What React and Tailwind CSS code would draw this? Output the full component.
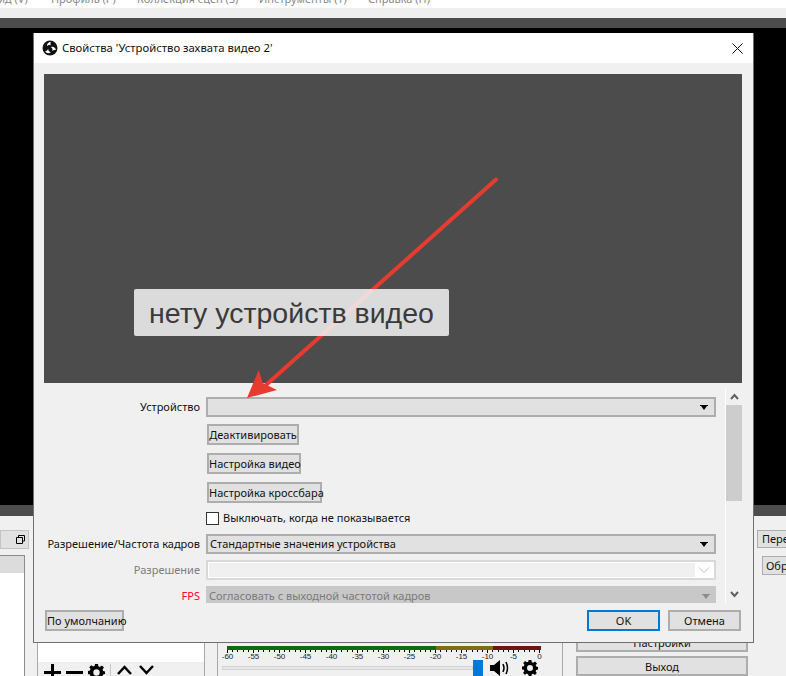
import React from "react";

const ui = { fontFamily: '"Noto Sans", Roboto, sans-serif' };

const scale = [-60, -55, -50, -45, -40, -35, -30, -25, -20, -15, -10, -5, 0];
const ticks = Array.from({ length: 61 }, (_, i) => i);

const Button = ({ children, className = "", border = "border-[#adadad]" }) => (
  <button className={`h-[21px] whitespace-nowrap border-2 bg-[#e1e1e1] text-[11px] leading-none text-[#111] ${border} ${className}`}>
    {children}
  </button>
);

const Caret = () => (
  <svg width="8" height="5" viewBox="0 0 8 5" className="shrink-0">
    <path d="M0 0H8V1H7L4 5L1 1H0Z" fill="#000" />
  </svg>
);

const Chevron = ({ up }) => (
  <svg width="9" height="7" viewBox="0 0 9 7" className={up ? "" : "rotate-180"}>
    <path d="M1 6L4.5 2L8 6" fill="none" stroke="#5f5f5f" strokeWidth="2" />
  </svg>
);

const Row = ({ label, labelClass = "text-[#111]", className = "", children }) => (
  <div className={`flex items-center gap-[6px] ${className}`}>
    <span className={`w-[156px] shrink-0 whitespace-nowrap text-right text-[11px] ${labelClass}`}>{label}</span>
    {children}
  </div>
);

const ObsLogo = () => (
  <svg width="16" height="16" viewBox="0 0 16 16">
    <circle cx="8" cy="8" r="7.5" fill="#111" />
    <path d="M9 1.800C6.400 2 4.700 3.800 5 6.300C5.800 4.900 7.500 4.500 9 5.300C8.300 4.200 8.300 2.900 9 1.800Z" fill="#fff" />
    <path d="M14 9.800C13.200 7.200 10.900 6.100 8.800 7C10.300 7.700 11 9.400 10.200 10.900C11.300 10.200 12.600 9.900 14 9.800Z" fill="#fff" />
    <path d="M3 11.600C4.700 13.700 7.200 13.800 8.900 12.200C7.200 12 6 10.500 6.200 8.700C5.600 10 4.500 11.100 3 11.600Z" fill="#fff" />
  </svg>
);

const Gear = ({ size = 16 }) => (
  <svg width={size} height={size} viewBox="0 0 16 16">
    <path
      fillRule="evenodd"
      d="M6.600 0H9.400L9.800 2.200L11.200 2.800L13.100 1.500L15 3.400L13.700 5.200L14.200 6.600L16 7V9.500L14.200 9.900L13.600 11.300L14.800 13.100L12.900 15L11.100 13.700L9.800 14.200L9.400 16H6.600L6.200 14.200L4.800 13.600L3 14.800L1.100 12.900L2.300 11.100L1.800 9.800L0 9.400V6.600L1.900 6.200L2.400 4.800L1.200 3L3.100 1.100L4.900 2.300L6.200 1.800ZM8 5A3 3 0 1 0 8 11A3 3 0 1 0 8 5Z"
      fill="#000"
    />
  </svg>
);

const SourcesToolbar = () => (
  <div className="flex h-[14px] items-start gap-[5px] overflow-hidden bg-[#f0f0f0] pl-[6px] pt-[2px]">
    <svg width="17" height="17" viewBox="0 0 17 17"><path d="M7 0H10V7H17V10H10V17H7V10H0V7H7Z" fill="#000" /></svg>
    <svg width="17" height="17" viewBox="0 0 17 17"><path d="M0 7H17V10H0Z" fill="#000" /></svg>
    <Gear size={17} />
    <div className="h-[14px] w-px bg-[#c8c8c8]" />
    <svg width="17" height="12" viewBox="0 0 17 12"><path d="M2 10L8.500 3L15 10" fill="none" stroke="#000" strokeWidth="2.500" /></svg>
    <svg width="17" height="12" viewBox="0 0 17 12"><path d="M2 2L8.500 9L15 2" fill="none" stroke="#000" strokeWidth="2.500" /></svg>
  </div>
);

const Mixer = () => (
  <div className="ml-[9px] pt-[4px]">
    <div className="flex h-[4px] w-[314px]">
      <div className="w-[209px] bg-[#0f6b0f]" />
      <div className="w-[57px] bg-[#7d6f10]" />
      <div className="flex-1 bg-[#6e1414]" />
    </div>
    <div className="flex h-[3px] w-[314px] justify-between">
      {ticks.map((t) => (
        <div key={t} className={`w-px bg-black ${t % 5 === 0 ? "h-[3px]" : "h-[2px]"}`} />
      ))}
    </div>
    <div className="-ml-[6px] flex h-[10px] w-[325px] justify-between text-[8px] leading-[8px] text-[#222]" style={{ fontFamily: '"Liberation Sans", sans-serif' }}>
      {scale.map((s) => (
        <span key={s} className="w-[13px] text-center">{s}</span>
      ))}
    </div>
    <div className="-ml-[5px] mt-[-3px] flex items-center">
      <div className="h-[4px] w-[251px] border border-[#d4d4d4] bg-[#e6e6e6]" />
      <div className="h-[16px] w-[10px] bg-[#0078d7]" />
      <svg width="22" height="16" viewBox="0 0 22 16" className="ml-[7px]">
        <path d="M0 5H4L10 0V16L4 11H0Z" fill="#000" />
        <path d="M13 4Q15 8 13 12M16 2Q19 8 16 14" fill="none" stroke="#000" strokeWidth="1.500" />
      </svg>
      <div className="ml-[10px]"><Gear size={16} /></div>
    </div>
  </div>
);

const Background = () => (
  <div className="flex h-[676px] w-[786px] flex-col overflow-hidden bg-[#f0f0f0] text-[11px] text-[#111]" style={ui}>
    <div className="h-[8px] overflow-hidden bg-white">
      <div className="-mt-[9px] flex whitespace-nowrap text-[11px] leading-[16px] text-[#888]">
        <span className="-ml-[9px] w-[60px]">Вид (V)</span>
        <span className="w-[86px]">Профиль (P)</span>
        <span className="w-[122px]">Коллекция сцен (S)</span>
        <span className="w-[109px]">Инструменты (T)</span>
        <span>Справка (H)</span>
      </div>
    </div>
    <div className="h-[10px] bg-[#efefef]" />
    <div className="h-[10px] bg-[#4c4c4c]" />
    <div className="h-[477px] bg-black" />
    <div className="h-[11px] bg-[#4c4c4c]" />
    <div className="flex min-h-0 flex-1">
      <div className="w-[37px] shrink-0 pt-[14px]">
        <div className="flex h-[19px] w-[29px] items-center justify-end border border-[#c4c4c4] bg-[#e1e1e1] pr-[3px]">
          <svg width="9" height="9" viewBox="0 0 9 9"><path d="M2.500 2.500V.5H8.500V6H6.500M.5 2.500H6.500V8.500H.5Z" fill="none" stroke="#000" /></svg>
        </div>
        <div className="mt-[6px] h-[130px] w-[25px] border-r border-t border-[#8c8c8c] bg-white">
          <div className="h-[17px] bg-[#dcdcdc]" />
        </div>
      </div>
      <div className="flex w-[168px] shrink-0 flex-col border-l border-r border-[#a8a8a8] bg-white">
        <div className="flex-1" />
        <SourcesToolbar />
      </div>
      <div className="ml-[12px] w-[346px] shrink-0 border-l border-r border-[#a8a8a8]">
        <div className="h-[126px]" />
        <Mixer />
      </div>
      <div className="ml-[13px] flex w-[172px] shrink-0 flex-col gap-[4px] pt-[116px]">
        <Button className="h-[20px]">Настройки</Button>
        <Button className="h-[20px]">Выход</Button>
      </div>
      <div className="ml-[9px] flex-1 overflow-hidden pt-[14px]">
        <div className="h-[18px] w-[40px] whitespace-nowrap border border-[#adadad] bg-[#e1e1e1] pl-[4px] leading-[16px]">Перейти</div>
        <div className="ml-[5px] mt-[8px] h-[19px] w-[40px] whitespace-nowrap border border-[#adadad] bg-[#e1e1e1] pl-[3px] leading-[17px]">Обрезать</div>
      </div>
    </div>
  </div>
);

const Dialog = () => (
  <div className="absolute left-[33px] top-[33px] flex h-[610px] w-[721px] flex-col border border-[#6f6f6f] border-t-0 bg-[#f0f0f0] text-[11px] text-[#111]" style={ui}>
    <div className="flex h-[30px] shrink-0 items-center bg-white pl-[8px] pr-[10px]">
      <ObsLogo />
      <span className="ml-[4px] flex-1 text-[11.300px]">Свойства 'Устройство захвата видео 2'</span>
      <svg width="11" height="11" viewBox="0 0 11 11"><path d="M.5 .5L10.500 10.500M10.500 .5L.5 10.500" stroke="#111" /></svg>
    </div>

    <div className="relative ml-[10px] mt-[11px] h-[309px] w-[698px] shrink-0 bg-[#4c4c4c]">
      <div className="absolute left-[90px] top-[215px] z-20 flex h-[47px] w-[315px] items-center justify-center rounded-[2px] bg-[#f5f5f5]/85 pt-[2px] text-[28.500px] text-[#3a3a3a]" style={{ fontFamily: '"Liberation Sans", sans-serif' }}>
        нету устройств видео
      </div>
    </div>

    <div className="ml-[10px] mt-[5px] flex h-[215px] w-[698px] shrink-0">
      <div className="w-[681px] overflow-hidden pt-[9px]">
        <Row label="Устройство">
          <div className="flex h-[20px] w-[510px] items-center justify-end border-2 border-[#adadad] bg-[#e1e1e1] pr-[6px]"><Caret /></div>
        </Row>
        <div className="ml-[163px] mt-[7px] flex flex-col items-start gap-[8px]">
          <Button className="w-[92px]">Деактивировать</Button>
          <Button className="w-[94px]">Настройка видео</Button>
          <Button className="w-[115px]">Настройка кроссбара</Button>
        </div>
        <label className="ml-[162px] mt-[9px] flex h-[13px] items-center gap-[4px]">
          <span className="h-[13px] w-[13px] border border-[#333] bg-white" />
          <span className="whitespace-nowrap">Выключать, когда не показывается</span>
        </label>
        <Row label="Разрешение/Частота кадров" className="mt-[9px]">
          <div className="flex h-[20px] w-[510px] items-center justify-between border-2 border-[#adadad] bg-[#e1e1e1] pl-[2px] pr-[6px]">
            <span>Стандартные значения устройства</span>
            <Caret />
          </div>
        </Row>
        <Row label="Разрешение" labelClass="text-[#7d7d7d]" className="mt-[6px]">
          <div className="flex h-[20px] w-[510px] items-center border-2 border-[#d9d9d9] bg-white p-[1px]">
            <div className="h-full flex-1 bg-[#f0f0f0]" />
            <svg width="18" height="8" viewBox="0 0 18 8"><path d="M4 1.500L9 6.500L14 1.500" fill="none" stroke="#bcbcbc" /></svg>
          </div>
        </Row>
        <Row label="FPS" labelClass="text-[#ff0033]" className="mt-[6px]">
          <div className="flex h-[20px] w-[510px] items-center justify-between bg-[#c8c8c8] pl-[3px] pr-[6px] text-[#7a7a7a]">
            <span>Согласовать с выходной частотой кадров</span>
            <svg width="8" height="5" viewBox="0 0 8 5"><path d="M0 0H8V1H7L4 5L1 1H0Z" fill="#8a8a8a" /></svg>
          </div>
        </Row>
      </div>
      <div className="flex w-[17px] flex-col items-center border-l border-white">
        <div className="flex h-[17px] items-center"><Chevron up /></div>
        <div className="h-[96px] w-full bg-[#cdcdcd]" />
        <div className="flex-1" />
        <div className="flex h-[17px] items-center"><Chevron /></div>
      </div>
    </div>

    <div className="ml-[11px] mt-[7px] flex w-[696px] items-center">
      <Button className="w-[79px]">По умолчанию</Button>
      <div className="flex-1" />
      <Button className="w-[73px]" border="border-[#0078d7]">OK</Button>
      <Button className="ml-[8px] w-[73px]">Отмена</Button>
    </div>

    <svg width="260" height="230" viewBox="0 0 260 230" className="pointer-events-none absolute left-[212px] top-[144px] z-10">
      <path d="M250 2.500L20 208" stroke="#e83b30" strokeWidth="4" strokeLinecap="round" />
      <path d="M1 221L12.700 193L16.700 206L31 213Z" fill="#e83b30" />
    </svg>
  </div>
);

export default function App() {
  return (
    <div className="relative h-[676px] w-[786px] overflow-hidden">
      <Background />
      <Dialog />
    </div>
  );
}
